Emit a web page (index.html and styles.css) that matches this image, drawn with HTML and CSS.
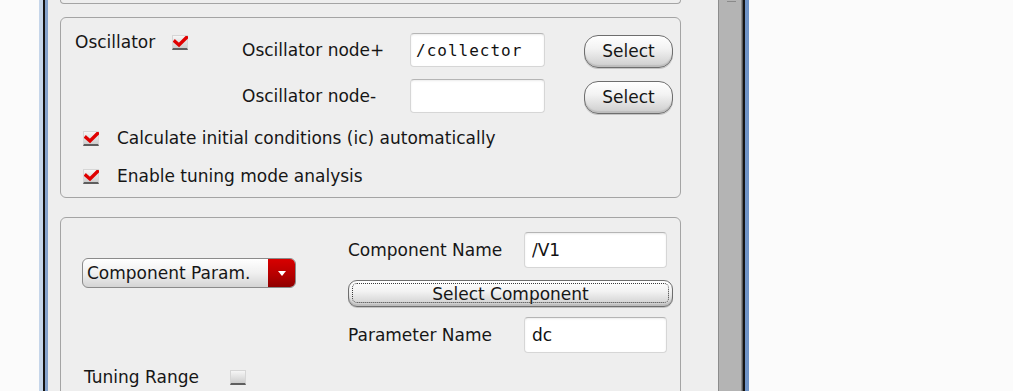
FILE: index.html
```html
<!DOCTYPE html>
<html lang="en">

<head>
    <meta charset="UTF-8">
    <meta name="viewport" content="width=device-width, initial-scale=1.0">
    <title>Oscillator options</title>
    <link rel="stylesheet" href="styles.css">
</head>

<body>
    <div class="desktop">
        <div class="window">
            <div class="frame-left"></div>
            <div class="content">
                <div class="group group-cut"></div>

                <div class="group osc">
                    <div class="osc-grid">
                        <div class="osc-toggle">
                            <span>Oscillator</span>
                            <span class="check on"><svg viewBox="0 0 15 12"><polyline points="2,5.5 6,9 13.5,1.5" /></svg></span>
                        </div>
                        <label class="label" for="nodePlus">Oscillator node+</label>
                        <input type="text" id="nodePlus" class="field mono" value="/collector">
                        <button class="btn">Select</button>

                        <label class="label row-2" for="nodeMinus">Oscillator node-</label>
                        <input type="text" id="nodeMinus" class="field mono row-2" value="">
                        <button class="btn row-2">Select</button>
                    </div>

                    <div class="check-row first">
                        <span class="check on"><svg viewBox="0 0 15 12"><polyline points="2,5.5 6,9 13.5,1.5" /></svg></span>
                        <span>Calculate initial conditions (ic) automatically</span>
                    </div>
                    <div class="check-row">
                        <span class="check on"><svg viewBox="0 0 15 12"><polyline points="2,5.5 6,9 13.5,1.5" /></svg></span>
                        <span>Enable tuning mode analysis</span>
                    </div>
                </div>

                <div class="group tune">
                    <div class="tune-grid">
                        <div class="combo">
                            <span class="combo-text">Component Param.</span>
                            <span class="combo-arrow"><svg viewBox="0 0 8 5"><polygon points="0,0 8,0 4,5" /></svg></span>
                        </div>

                        <label class="label" for="compName">Component Name</label>
                        <input type="text" id="compName" class="field" value="/V1">

                        <button class="btn wide">Select Component</button>

                        <label class="label row-3" for="paramName">Parameter Name</label>
                        <input type="text" id="paramName" class="field row-3" value="dc">

                        <div class="tuning-range">
                            <span>Tuning Range</span>
                            <span class="check"></span>
                        </div>
                    </div>
                </div>
            </div>
            <div class="scrollbar"><span class="grip"></span></div>
            <div class="frame-right"></div>
        </div>
    </div>
</body>

</html>
```

FILE: styles.css
```css
* {
    box-sizing: border-box;
}

body {
    margin: 0;
    font-family: "DejaVu Sans", sans-serif;
    font-size: 17px;
    color: #161616;
    background-color: #fbfbfb;
    overflow: hidden;
}

.desktop {
    height: 391px;
    padding-left: 39px;
    display: flex;
}

.window {
    display: flex;
    height: 100%;
}

.frame-left {
    width: 9px;
    background: linear-gradient(to right, #c6d6ea 0 4px, #141414 4px 6px, #86a3cc 6px 9px);
}

.frame-right {
    width: 7px;
    background: linear-gradient(to right, #5a5a5a 0 1px, #141414 1px 3px, #6f93c6 3px 7px);
}

.content {
    width: 670px;
    padding: 0 37px 0 12px;
    background-color: #eeeeee;
    overflow: hidden;
}

.scrollbar {
    width: 24px;
    background-color: #b4b4b4;
    border-left: 1px solid #8c8c8c;
    border-right: 1px solid #8a8a8a;
    position: relative;
}

.grip {
    position: absolute;
    top: 1px;
    left: 8px;
    width: 9px;
    height: 1px;
    background-color: #8a8a8a;
}

.group {
    border: 1px solid #a4a4a4;
    border-radius: 6px;
}

.group-cut {
    height: 4px;
    border-top: none;
    border-radius: 0 0 6px 6px;
    margin-bottom: 13px;
}

/* oscillator group */
.osc {
    padding: 15px 7px 10px 14px;
    margin-bottom: 19px;
}

.osc-grid {
    display: grid;
    grid-template-columns: 167px 168px 135px 1fr;
    grid-template-rows: 34px 34px;
    row-gap: 12px;
    align-items: center;
}

.osc-toggle {
    align-self: start;
    display: flex;
    align-items: center;
    gap: 17px;
    line-height: 18px;
}

.row-2 {
    grid-row: 2;
}

.osc-grid .label {
    grid-column: 2;
}

.osc-grid .field {
    grid-column: 3;
}

.osc-grid .btn {
    grid-column: 4;
    justify-self: end;
    width: 89px;
    height: 33px;
    margin-top: 2px;
}

.check-row {
    display: flex;
    align-items: center;
    gap: 18px;
    height: 22px;
    margin-left: 8px;
    margin-top: 16px;
}

.check-row.first {
    margin-top: 14px;
}

/* checkbox */
.check {
    display: inline-block;
    width: 16px;
    height: 15px;
    background: linear-gradient(#f6f6f6, #cdcdcd);
    border: 1px solid #d6d6d6;
    border-bottom: 2px solid #5e5e5e;
    position: relative;
}

.check svg {
    position: absolute;
    left: 0;
    top: 0;
    width: 15px;
    height: 12px;
}

.check polyline {
    fill: none;
    stroke: #e00000;
    stroke-width: 3.4;
    stroke-linecap: square;
}

/* inputs and buttons */
.field {
    height: 34px;
    width: 100%;
    padding: 0 7px;
    border: 1px solid #d6d6d6;
    border-top-color: #b5b5b5;
    border-radius: 4px;
    background-color: #ffffff;
    box-shadow: inset 0 1px 2px rgba(0, 0, 0, 0.08);
    font-family: "DejaVu Sans", sans-serif;
    font-size: 17px;
    color: #111;
}

.field.mono {
    font-family: "DejaVu Sans Mono", monospace;
    font-size: 16px;
    letter-spacing: 1px;
    padding-left: 5px;
}

.btn {
    font-family: "DejaVu Sans", sans-serif;
    font-size: 17px;
    color: #161616;
    border: 1px solid #6e6e6e;
    border-radius: 14px;
    background: linear-gradient(#ffffff, #f3f3f3 40%, #cdcdcd);
    box-shadow: inset 0 -2px 1px #bdbdbd, 0 1px 0 #c4c4c4;
    padding: 0;
}

/* tuning group */
.tune {
    padding: 14px 7px 20px 0;
    height: 190px;
}

.tune-grid {
    display: grid;
    grid-template-columns: 287px 176px 143px 1fr;
    grid-template-rows: 36px 29px 36px auto;
    row-gap: 10px;
    align-items: center;
}

.tune-grid .label {
    grid-column: 2;
}

.tune-grid .field {
    grid-column: 3;
    height: 36px;
}

.row-3 {
    grid-row: 3;
}

.combo {
    grid-column: 1;
    grid-row: 1 / 3;
    align-self: start;
    margin: 26px 0 0 21px;
    width: 214px;
    height: 30px;
    display: flex;
    border: 1px solid #8a8a8a;
    border-radius: 6px;
    overflow: hidden;
    background: linear-gradient(#ffffff, #f0f0f0 50%, #d4d4d4);
}

.combo-text {
    flex: 1;
    padding-left: 4px;
    line-height: 28px;
}

.combo-arrow {
    width: 27px;
    background: linear-gradient(#d80000, #b30000 60%, #8e0000);
    display: flex;
    align-items: center;
    justify-content: center;
}

.combo-arrow svg {
    width: 8px;
    height: 5px;
}

.combo-arrow polygon {
    fill: #ffffff;
}

.btn.wide {
    grid-column: 2 / 5;
    grid-row: 2;
    align-self: end;
    height: 27px;
    border-radius: 9px;
    position: relative;
    line-height: 20px;
}

.btn.wide::after {
    content: "";
    position: absolute;
    inset: 2px 3px 3px 3px;
    border: 1px dotted #3a3a3a;
    border-radius: 5px;
}

.tuning-range {
    grid-column: 1;
    grid-row: 4;
    display: flex;
    align-items: center;
    gap: 31px;
    margin: 4px 0 0 23px;
    line-height: 20px;
}
```
